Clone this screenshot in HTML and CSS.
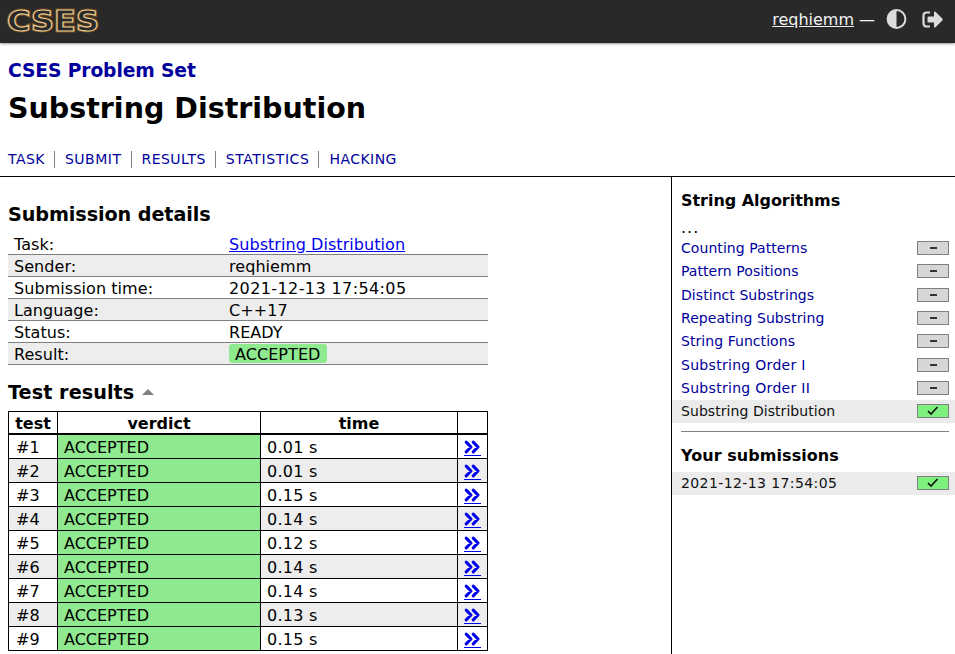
FILE: index.html
```html
<!DOCTYPE html>
<html lang="en">
<head>
<meta charset="utf-8">
<title>CSES - Substring Distribution</title>
<link rel="stylesheet" href="styles.css">
</head>
<body>
<svg class="defs" width="0" height="0">
  <symbol id="more" viewBox="0 0 17 14"><path d="M2.200 2.200l4.800 4.800-4.800 4.800M9.200 2.200l4.800 4.800-4.800 4.800" fill="none" stroke="currentColor" stroke-width="3.100" stroke-linecap="round" stroke-linejoin="round"/></symbol>
  <symbol id="check" viewBox="0 0 12 10"><path d="M1 5L4 8 10.500 1" fill="none" stroke="#111" stroke-width="1.700"/></symbol>
</svg>
<header class="header">
  <a class="logo"><svg width="110" height="34" viewBox="0 0 110 34">
    <text class="logo-glow" x="-1" y="23.500" textLength="92" lengthAdjust="spacingAndGlyphs">CSES</text>
    <text class="logo-line" x="-1" y="23.500" textLength="92" lengthAdjust="spacingAndGlyphs">CSES</text>
  </svg></a>
  <div class="controls">
    <a class="account">reqhiemm</a>
    <span class="dash">—</span>
    <svg class="contrast" width="21" height="20" viewBox="0 0 20 20"><circle cx="10" cy="10" r="8.900" fill="none" stroke="#dcdcdc" stroke-width="2"/><path d="M10 1a9 9 0 0 0 0 18z" fill="#dcdcdc"/></svg>
    <svg class="logout" width="21" height="17" viewBox="0 0 21 17"><path d="M8 1.500H4.500a3 3 0 0 0-3 3v8a3 3 0 0 0 3 3H8" fill="none" stroke="#dcdcdc" stroke-width="2.200"/><path d="M6.500 5.500H12V1.200q.3-1.200 1.500-.4l7 7q.5.700 0 1.400l-7 7q-1.200.8-1.500-.4V11.500H6.500q-1 0-1-1v-4q0-1 1-1z" fill="#dcdcdc"/></svg>
  </div>
</header>
<div class="title-block">
  <h3><a>CSES Problem Set</a></h3>
  <h1>Substring Distribution</h1>
  <ul class="nav"><li>TASK</li><li class="submit">SUBMIT</li><li>RESULTS</li><li class="stats">STATISTICS</li><li>HACKING</li></ul>
</div>
<div class="wrapper">
  <main class="content">
    <h2 class="details-title">Submission details</h2>
    <table class="summary">
      <tr><td>Task:</td><td><a class="link">Substring Distribution</a></td></tr>
      <tr><td>Sender:</td><td>reqhiemm</td></tr>
      <tr><td>Submission time:</td><td class="date">2021-12-13 17:54:05</td></tr>
      <tr><td>Language:</td><td>C++17</td></tr>
      <tr><td>Status:</td><td>READY</td></tr>
      <tr><td>Result:</td><td><span class="badge">ACCEPTED</span></td></tr>
    </table>
    <h2 class="results-title">Test results <span class="caret"></span></h2>
    <table class="results">
      <colgroup><col class="c-test"><col class="c-verdict"><col class="c-time"><col class="c-more"></colgroup>
      <thead><tr><th>test</th><th>verdict</th><th>time</th><th></th></tr></thead>
      <tbody>
      <tr><td>#1</td><td>ACCEPTED</td><td>0.01 s</td><td><a class="more"><svg><use href="#more"/></svg></a></td></tr>
      <tr><td>#2</td><td>ACCEPTED</td><td>0.01 s</td><td><a class="more"><svg><use href="#more"/></svg></a></td></tr>
      <tr><td>#3</td><td>ACCEPTED</td><td>0.15 s</td><td><a class="more"><svg><use href="#more"/></svg></a></td></tr>
      <tr><td>#4</td><td>ACCEPTED</td><td>0.14 s</td><td><a class="more"><svg><use href="#more"/></svg></a></td></tr>
      <tr><td>#5</td><td>ACCEPTED</td><td>0.12 s</td><td><a class="more"><svg><use href="#more"/></svg></a></td></tr>
      <tr><td>#6</td><td>ACCEPTED</td><td>0.14 s</td><td><a class="more"><svg><use href="#more"/></svg></a></td></tr>
      <tr><td>#7</td><td>ACCEPTED</td><td>0.14 s</td><td><a class="more"><svg><use href="#more"/></svg></a></td></tr>
      <tr><td>#8</td><td>ACCEPTED</td><td>0.13 s</td><td><a class="more"><svg><use href="#more"/></svg></a></td></tr>
      <tr><td>#9</td><td>ACCEPTED</td><td>0.15 s</td><td><a class="more"><svg><use href="#more"/></svg></a></td></tr>
      </tbody>
    </table>
  </main>
  <aside class="sidebar">
    <h4>String Algorithms</h4>
    <div class="dots">...</div>
    <div class="item"><a>Counting Patterns</a><span class="score"></span></div>
    <div class="item"><a>Pattern Positions</a><span class="score"></span></div>
    <div class="item"><a>Distinct Substrings</a><span class="score"></span></div>
    <div class="item"><a>Repeating Substring</a><span class="score"></span></div>
    <div class="item"><a>String Functions</a><span class="score"></span></div>
    <div class="item order"><a>Substring Order I</a><span class="score"></span></div>
    <div class="item order"><a>Substring Order II</a><span class="score"></span></div>
    <div class="item current"><a>Substring Distribution</a><span class="score full"><svg><use href="#check"/></svg></span></div>
    <hr>
    <h4 class="yours">Your submissions</h4>
    <div class="item current"><a class="date">2021-12-13 17:54:05</a><span class="score full"><svg><use href="#check"/></svg></span></div>
  </aside>
</div>
</body>
</html>
```
FILE: styles.css
```css
* { box-sizing: border-box; }
html { height: 100%; overflow: hidden; }
body {
  margin: 0;
  height: 100%;
  overflow: hidden;
  display: flex;
  flex-direction: column;
  font: 16px/19px "DejaVu Sans", Verdana, sans-serif;
  color: #000;
  background: #fff;
}
h1, h2, h3, h4, ul { margin: 0; padding: 0; }
.defs { display: none; }

.header {
  flex: none;
  height: 43px;
  padding: 0 12px 0 8px;
  display: flex;
  justify-content: space-between;
  background: #292929;
  box-shadow: 0 0 3px #544;
}
.logo { padding-top: 7px; }
.logo svg, .controls svg { display: block; }
.logo svg { overflow: visible; }
.logo text { font: bold 28px "DejaVu Sans", sans-serif; }
.logo-glow { fill: #292929; stroke: #6f4c22; stroke-width: 3; }
.logo-line { fill: #292929; stroke: #e8ca94; stroke-width: 1.100; }
.controls { display: flex; align-items: center; height: 38px; color: #f2f2f2; }
.account { text-decoration: underline; }
.dash { margin: 0 11px 0 5px; }
.logout { margin-left: 15px; }

.title-block { flex: none; height: 134px; padding: 17px 8px 0; border-bottom: 1px solid #000; }
h3 { font-size: 18.720px; line-height: 22px; letter-spacing: -.12px; color: #00009c; }
h1 { margin-top: 9px; font-size: 28.500px; line-height: 36px; }
.nav { display: flex; margin-top: 24px; list-style: none; font-size: 14px; line-height: 17px; letter-spacing: .45px; color: #00009c; }
.nav li + li { margin-left: 9px; padding-left: 10px; border-left: 1px solid #808080; }
.nav li + .stats { letter-spacing: .6px; }
.nav li + .submit { letter-spacing: .52px; }

.wrapper { flex: 1; min-height: 0; display: flex; }
.content { flex: 1; min-width: 0; padding: 26px 8px 0; }
h2 { font-size: 19.200px; line-height: 24px; }
.details-title { letter-spacing: -.09px; }
.results-title { letter-spacing: .06px; }
table { border-spacing: 0; table-layout: fixed; width: 480px; }
.summary { margin-top: 6px; letter-spacing: .06px; }
.date { letter-spacing: .4px; }
.summary td { height: 22px; padding: 1px 0 0; border-bottom: 1px solid #808080; }
.summary td:first-child { width: 221px; padding-left: 6px; }
.summary tr:nth-child(even) td { background: #ededed; }
.link { color: #0000ee; text-decoration: underline; }
.badge { display: block; width: 98px; height: 19px; margin-top: -1px; padding: 1px 0 0 6px; border-radius: 3px; background: #8fe98f; }
.results-title { margin-top: 16px; }
.caret {
  display: inline-block;
  margin-left: 1px;
  border: 6px solid transparent;
  border-top: 0;
  border-bottom-color: #808080;
  vertical-align: 4px;
}
.results { margin-top: 6px; border: solid #000; border-width: 1px 0 0 1px; }
.c-test { width: 49px; }
.c-verdict { width: 203px; }
.c-time { width: 197px; }
.c-more { width: 30px; }
.results th, .results td { border: solid #000; border-width: 0 1px 1px 0; }
.results th { height: 23px; padding: 1px 0 0; border-bottom-width: 2px; }
.results td { height: 24px; padding: 1px 6px 0; }
.results td:first-child { padding-left: 7px; }
.results td:nth-child(3) { letter-spacing: .25px; }
.results tbody tr:nth-child(even) td { background: #ededed; }
.results tbody tr td:nth-child(2) { background: #8fe98f; }
.more { display: block; width: 17px; height: 18px; padding-top: 2px; border-bottom: 1px solid #0000ee; color: #0000ee; }
.more svg { display: block; width: 17px; height: 14px; }

.sidebar { flex: none; width: 284px; padding: 14px 6px 0 9px; border-left: 1px solid #000; }
h4 { font-size: 16px; line-height: 19px; letter-spacing: -.04px; }
.dots { margin-top: 8px; height: 18.600px; letter-spacing: 1px; }
.item {
  display: flex;
  align-items: center;
  justify-content: space-between;
  height: 23.330px;
  margin: 0 -6px 0 -9px;
  padding: 0 6px 0 9px;
  font-size: 14px;
  letter-spacing: .06px;
  color: #00009c;
}
.item a { padding-top: .8px; }
.order { letter-spacing: .3px; }
.current { color: #111; background: #ebebeb; }
.score {
  width: 32px;
  height: 14px;
  display: flex;
  align-items: center;
  justify-content: center;
  border: 1px solid #808080;
  background: #d6d6d6;
  margin-top: -.8px;
}
.score::before { content: ""; width: 7px; height: 2px; background: #333; }
.full { background: #7df07d; }
.full::before { display: none; }
.score svg { width: 12px; height: 10px; }
hr { margin: 8px 0 0; border: 0; border-top: 1px solid #808080; }
.yours { margin: 14px 0 6.700px; letter-spacing: .06px; }
```
